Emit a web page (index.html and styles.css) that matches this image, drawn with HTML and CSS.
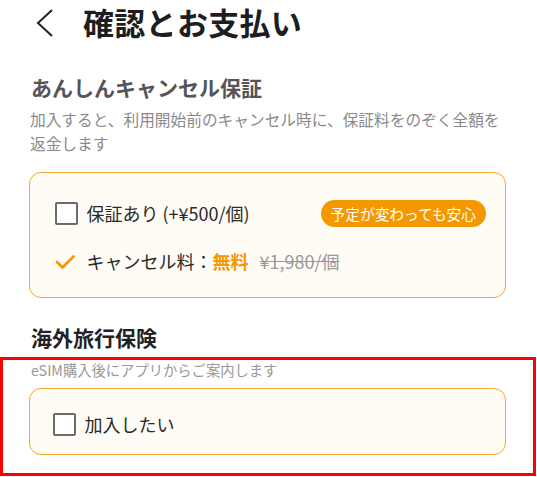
FILE: index.html
```html
<!DOCTYPE html>
<html lang="ja">
<head>
<meta charset="utf-8">
<link rel="stylesheet" href="styles.css">
</head>
<body>
<div class="page">
  <header class="header">
    <svg class="back" width="20" height="30" viewBox="0 0 20 30"><polyline points="17,2 3,15 17,28" fill="none" stroke="#222" stroke-width="2"/></svg>
    <h1 class="title">確認とお支払い</h1>
  </header>
  <main class="content">
    <h2 class="sec-title muted">あんしんキャンセル保証</h2>
    <p class="desc">加入すると、利用開始前のキャンセル時に、保証料をのぞく全額を返金します</p>
    <div class="card card-guarantee">
      <div class="row row-space">
        <label class="opt"><span class="box"></span><span class="opt-text">保証あり (+¥500/個)</span></label>
        <span class="badge">予定が変わっても安心</span>
      </div>
      <div class="row row-check">
        <span class="check-cell"><svg width="21" height="16" viewBox="0 0 21 16"><polyline points="2,8 7.5,13.5 18.5,2.5" fill="none" stroke="#f39800" stroke-width="2.8" stroke-linecap="round" stroke-linejoin="round"/></svg></span>
        <span class="opt-text">キャンセル料：<span class="free">無料</span><s class="old">¥1,980/個</s></span>
      </div>
    </div>
    <h2 class="sec-title dark">海外旅行保険</h2>
    <p class="note">eSIM購入後にアプリからご案内します</p>
    <div class="card card-travel">
      <label class="opt"><span class="box"></span><span class="opt-text">加入したい</span></label>
    </div>
  </main>
  <div class="highlight"></div>
</div>
</body>
</html>
```
FILE: styles.css
```css
* { box-sizing: border-box; }
html, body { margin: 0; padding: 0; background: #fff; }
body {
  font-family: "Noto Sans CJK JP", "Noto Sans", sans-serif;
  color: #222;
  width: 537px;
  height: 477px;
  overflow: hidden;
}
.page { position: relative; width: 537px; height: 477px; }
.header {
  height: 44px;
  display: flex;
  align-items: center;
  padding-left: 35px;
  gap: 28px;
}
.back { display: block; margin-top: 1px; }
.title {
  margin: 0;
  font-size: 31px;
  font-weight: 700;
  line-height: 44px;
  color: #1e1e1e;
  letter-spacing: 0.3px;
}
.content { padding: 0 31px 0 29px; }
.sec-title {
  margin: 0;
  font-size: 21px;
  line-height: 30px;
  font-weight: 700;
  padding-left: 2px;
}
.sec-title.muted { margin-top: 28px; color: #555; }
.sec-title.dark { margin-top: 24px; color: #222; }
.desc {
  margin: 6px 0 0;
  padding-left: 1px;
  font-size: 15.7px;
  line-height: 24px;
  color: #8a8a8a;
}
.note {
  margin: 7px 0 0;
  padding-left: 2px;
  font-size: 14.3px;
  line-height: 22px;
  color: #999;
}
.card {
  background: #fffcf5;
  border: 1.5px solid #f5a62e;
  border-radius: 12px;
}
.card-guarantee {
  margin-top: 16px;
  padding: 26px 19px 22px 24.5px;
  display: flex;
  flex-direction: column;
  gap: 20px;
}
.card-travel {
  margin-top: 7px;
  padding: 21px 20px 16px 22.5px;
}
.row { display: flex; align-items: center; height: 28px; }
.row-space { justify-content: space-between; }
.opt { display: flex; align-items: center; gap: 9px; }
.box {
  width: 23px;
  height: 23px;
  border: 2.5px solid #6b6b6b;
  border-radius: 2px;
  background: #fff;
  flex: none;
}
.opt-text { font-size: 18px; line-height: 28px; color: #2a2a2a; }
.badge {
  background: #f39800;
  color: #fff;
  font-size: 14.7px;
  line-height: 27px;
  height: 27px;
  padding: 0 10px 0 10px;
  border-radius: 14px;
}
.check-cell { width: 23px; display: flex; align-items: center; margin-right: 9px; margin-top: 1px; }
.check-cell svg { display: block; }
.free { color: #f39800; font-weight: 700; margin-right: 11px; }
.old { color: #9a9a9a; font-size: 18px; }
.highlight {
  position: absolute;
  left: 0;
  top: 357px;
  width: 536px;
  height: 119px;
  border: 3px solid #ff0000;
  pointer-events: none;
}
```
